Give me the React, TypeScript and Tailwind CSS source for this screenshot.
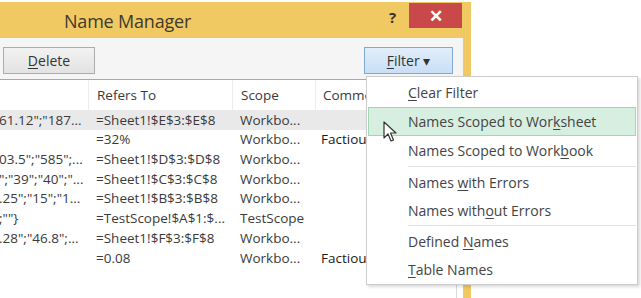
import React from "react";

type Row = { value: string; refersTo: string; scope: string; comment?: string };

const rows: Row[] = [
  { value: '61.12";"187...', refersTo: "=Sheet1!$E$3:$E$8", scope: "Workbo..." },
  { value: "", refersTo: "=32%", scope: "Workbo...", comment: "Factiou" },
  { value: '03.5";"585";...', refersTo: "=Sheet1!$D$3:$D$8", scope: "Workbo..." },
  { value: '";"39";"40";"...', refersTo: "=Sheet1!$C$3:$C$8", scope: "Workbo..." },
  { value: '.25";"15";"1...', refersTo: "=Sheet1!$B$3:$B$8", scope: "Workbo..." },
  { value: ';""}', refersTo: "=TestScope!$A$1:$...", scope: "TestScope" },
  { value: '.28";"46.8";...', refersTo: "=Sheet1!$F$3:$F$8", scope: "Workbo..." },
  { value: "", refersTo: "=0.08", scope: "Workbo...", comment: "Factiou" },
];

// label split into before / underlined key / after
const MenuItem = ({ pre, key2, post, active = false, tall = true }: { pre: string; key2: string; post: string; active?: boolean; tall?: boolean }) => (
  <div
    className={`flex items-center pl-[39px] mx-[1px] ${tall ? "h-[29px]" : "h-[28px]"} ${
      active ? "bg-[#d7efe1] border border-[#a3d6b6]" : "border border-transparent"
    }`}
  >
    <span className="text-[14px] text-[#444]">
      {pre}
      <span className="underline underline-offset-2">{key2}</span>
      {post}
    </span>
  </div>
);

const Separator = () => <div className="h-px bg-[#e3e3e3] ml-[41px] mr-[1px] my-[1px]" />;

const App = () => {
  return (
    <div className="relative w-[641px] h-[298px] bg-white overflow-hidden" style={{ fontFamily: '"Open Sans", "Noto Sans", sans-serif' }}>
      {/* WINDOW */}
      <div className="w-[471px] h-full flex flex-col pt-[2px]">
        {/* TITLE BAR */}
        <div className="h-[36px] bg-[#f1c962] flex items-start">
          <div className="flex-1 pl-[64px] pt-[6px] text-[18px] tracking-[-0.2px] text-[#3e3a2c]">Name Manager</div>
          <div className="w-[20px] pt-[4px] text-[15px] font-bold text-[#333]">?</div>
          <div className="w-[53px] h-[25px] mt-[1px] bg-[#c9494b] flex items-center justify-center text-white text-[17px] font-bold">
            ✕
          </div>
          <div className="w-[9px]" />
        </div>

        {/* BODY */}
        <div className="flex-1 flex">
          <div className="flex-1 flex flex-col">
            {/* TOOLBAR */}
            <div className="h-[42px] bg-[#f5f5f5] border-b border-[#a8a8a8] flex items-center px-[3px] pt-[3px]">
              <button className="w-[92px] h-[27px] border border-[#acacac] bg-gradient-to-b from-[#f2f2f2] to-[#e3e3e3] text-[14px] text-[#333]">
                <span className="underline underline-offset-2">D</span>elete
              </button>
              <div className="flex-1" />
              <button className="w-[89px] h-[27px] mr-[7px] border border-[#7ea8d8] bg-gradient-to-b from-[#e2eefb] to-[#c8dff6] text-[14px] text-[#333]">
                <span className="underline underline-offset-2">F</span>ilter ▾
              </button>
            </div>

            {/* TABLE */}
            <div className="flex-1 bg-white border-r border-[#d9d9d9] mr-[6px] text-[13.5px] text-[#3a3a3a]">
              <div className="h-[30px] flex items-center">
                <div className="w-[88px] h-full" />
                <div className="w-[144px] h-full pl-[8px] flex items-center border-l border-[#ececec]">Refers To</div>
                <div className="w-[83px] h-full pl-[8px] flex items-center border-l border-[#ececec]">Scope</div>
                <div className="flex-1 h-full pl-[7px] flex items-center border-l border-[#ececec]">Comment</div>
              </div>
              {rows.map((r, i) => (
                <div key={i} className={`h-[19.7px] flex items-center whitespace-nowrap ${i === 0 ? "bg-[#e9e9e9]" : ""}`}>
                  <div className="w-[88px] -ml-[1px] overflow-hidden">{r.value}</div>
                  <div className="w-[144px] pl-[9px] overflow-hidden">{r.refersTo}</div>
                  <div className="w-[83px] pl-[9px]">{r.scope}</div>
                  <div className="flex-1 pl-[7px] font-medium text-[#1a1a1a] overflow-hidden">{r.comment}</div>
                </div>
              ))}
            </div>
          </div>
          <div className="w-[8px] bg-[#f1c962]" />
        </div>
      </div>

      {/* FILTER MENU */}
      <div className="absolute left-[366px] top-[76px] w-[272px] bg-white border border-[#cccccc] shadow-[2px_2px_3px_rgba(0,0,0,0.15)] py-[1px]">
        <MenuItem pre="" key2="C" post="lear Filter" />
        <MenuItem pre="Names Scoped to Wor" key2="k" post="sheet" active />
        <MenuItem pre="Names Scoped to Work" key2="b" post="ook" />
        <Separator />
        <MenuItem pre="Names " key2="w" post="ith Errors" tall={false} />
        <MenuItem pre="Names with" key2="o" post="ut Errors" tall={false} />
        <Separator />
        <MenuItem pre="Defined " key2="N" post="ames" tall={false} />
        <MenuItem pre="" key2="T" post="able Names" tall={false} />
      </div>

      {/* MOUSE CURSOR */}
      <svg className="absolute left-[383px] top-[121px]" width="15" height="23" viewBox="0 0 15 23">
        <path d="M1 1 L1 17 L5 13 L8 20 L10.5 19 L7.5 12 L13 12 Z" fill="white" stroke="#333" strokeWidth="1.2" strokeLinejoin="round" />
      </svg>
    </div>
  );
};

export default App;
